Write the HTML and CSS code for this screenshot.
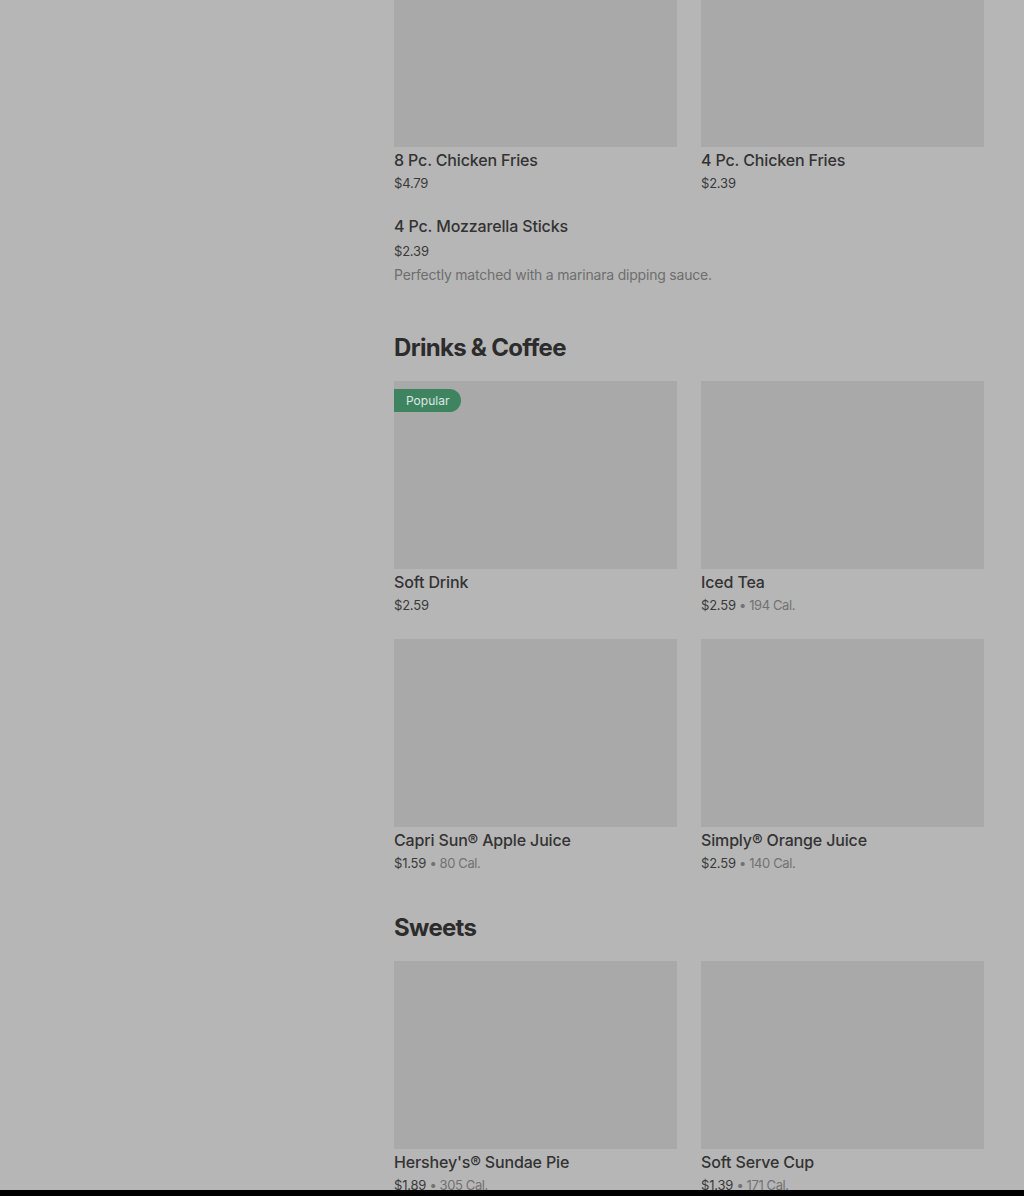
FILE: index.html
```html
<!DOCTYPE html>
<html lang="en">
<head>
    <meta charset="UTF-8">
    <title>Menu</title>
    <link rel="stylesheet" href="styles.css">
</head>
<body>
    <div class="layout">
        <aside class="side"></aside>

        <main class="menu">
            <section class="section section-first">
                <div class="grid">
                    <div class="item">
                        <div class="thumb"></div>
                        <div class="name">8 Pc. Chicken Fries</div>
                        <div class="meta"><span class="price">$4.79</span></div>
                    </div>
                    <div class="item">
                        <div class="thumb"></div>
                        <div class="name">4 Pc. Chicken Fries</div>
                        <div class="meta"><span class="price">$2.39</span></div>
                    </div>
                </div>
                <div class="item-text">
                    <div class="name">4 Pc. Mozzarella Sticks</div>
                    <div class="meta"><span class="price">$2.39</span></div>
                    <div class="desc">Perfectly matched with a marinara dipping sauce.</div>
                </div>
            </section>

            <section class="section">
                <h2 class="heading">Drinks &amp; Coffee</h2>
                <div class="grid">
                    <div class="item">
                        <div class="thumb"><span class="badge">Popular</span></div>
                        <div class="name">Soft Drink</div>
                        <div class="meta"><span class="price">$2.59</span></div>
                    </div>
                    <div class="item">
                        <div class="thumb"></div>
                        <div class="name">Iced Tea</div>
                        <div class="meta"><span class="price">$2.59</span><span class="cal"> • 194 Cal.</span></div>
                    </div>
                    <div class="item">
                        <div class="thumb"></div>
                        <div class="name">Capri Sun® Apple Juice</div>
                        <div class="meta"><span class="price">$1.59</span><span class="cal"> • 80 Cal.</span></div>
                    </div>
                    <div class="item">
                        <div class="thumb"></div>
                        <div class="name">Simply® Orange Juice</div>
                        <div class="meta"><span class="price">$2.59</span><span class="cal"> • 140 Cal.</span></div>
                    </div>
                </div>
            </section>

            <section class="section">
                <h2 class="heading">Sweets</h2>
                <div class="grid">
                    <div class="item">
                        <div class="thumb"></div>
                        <div class="name">Hershey's® Sundae Pie</div>
                        <div class="meta"><span class="price">$1.89</span><span class="cal"> • 305 Cal.</span></div>
                    </div>
                    <div class="item">
                        <div class="thumb"></div>
                        <div class="name">Soft Serve Cup</div>
                        <div class="meta"><span class="price">$1.39</span><span class="cal"> • 171 Cal.</span></div>
                    </div>
                </div>
            </section>
        </main>
    </div>

    <div class="bottom-bar"></div>
</body>
</html>
```

FILE: styles.css
```css
html, body {
    height: 100%;
    overflow: hidden;
}
body {
    margin: 0;
    background-color: #b6b6b6;
    font-family: Inter, "Noto Sans", sans-serif;
    color: #2f2f2f;
}
.layout {
    display: grid;
    grid-template-columns: 370px 590px;
    column-gap: 24px;
}
.section {
    padding-top: 39px;
}
.section-first {
    padding-top: 0;
    margin-top: -41px;
}
.heading {
    margin: 0 0 17px;
    font-size: 24px;
    line-height: 32px;
    font-weight: 700;
    letter-spacing: -0.7px;
    color: #2c2c2c;
}
.grid {
    display: grid;
    grid-template-columns: 283px 283px;
    column-gap: 24px;
    row-gap: 24px;
}
.thumb {
    position: relative;
    height: 188px;
    background-color: #a9a9a9;
}
.badge {
    position: absolute;
    top: 8px;
    left: 0;
    height: 23px;
    line-height: 23px;
    padding: 0 12px;
    background-color: #3f8460;
    color: #dfe7e2;
    font-size: 12px;
    border-radius: 0 12px 12px 0;
}
.name {
    padding-top: 1px;
    height: 23px;
    font-size: 16px;
    line-height: 24px;
    font-weight: 500;
    letter-spacing: -0.15px;
    color: #333;
}
.meta {
    padding-top: 1px;
    height: 21px;
    font-size: 13px;
    line-height: 22px;
    letter-spacing: -0.2px;
}
.price {
    color: #3a3a3a;
}
.cal {
    color: #727272;
    letter-spacing: -0.4px;
}
.item-text {
    padding: 23px 0 8px;
}
.item-text .name {
    padding-top: 0;
    height: 20px;
    line-height: 20px;
}
.item-text .meta {
    margin-top: 5px;
    padding-top: 0;
    height: 20px;
    line-height: 20px;
}
.desc {
    margin-top: 4px;
    font-size: 14px;
    line-height: 20px;
    letter-spacing: -0.2px;
    color: #6e6e6e;
}
.bottom-bar {
    position: fixed;
    left: 0;
    right: 0;
    bottom: 0;
    height: 6px;
    background-color: #000;
}
```
